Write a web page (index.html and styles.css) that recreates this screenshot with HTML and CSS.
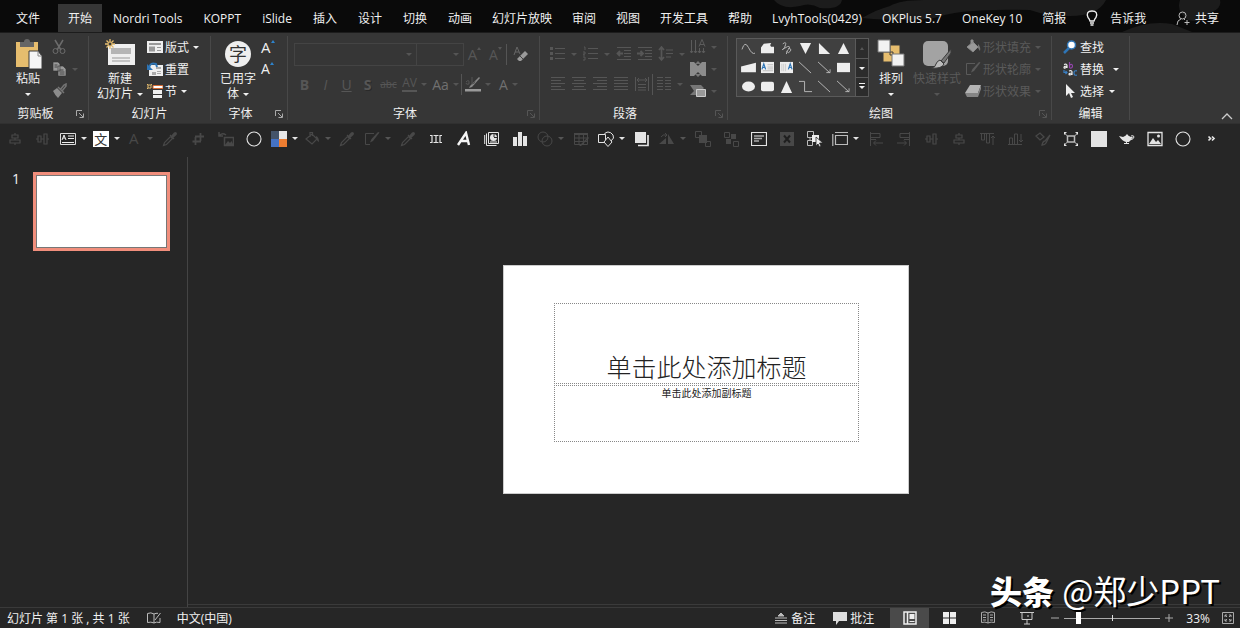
FILE: index.html
```html
<!DOCTYPE html>
<html lang="zh-CN">
<head>
<meta charset="utf-8">
<title>演示文稿</title>
<link rel="stylesheet" href="styles.css">
</head>
<body>
<svg class="sprite" aria-hidden="true">
  <symbol id="launch" viewBox="0 0 8 8"><path d="M.5 6V.5H6M3 3l4 4M7.500 3.500v4h-4" fill="none" stroke="currentColor"/></symbol>
  <symbol id="alignh" viewBox="0 0 16 16"><path d="M8 2v2M8 7v2M8 12v2M5 4h6v3H5zM3 9h10v3H3z" fill="none" stroke="currentColor" stroke-width="1.200"/></symbol>
  <symbol id="alignv" viewBox="0 0 16 16"><path d="M1 8h2M6 8h3M12 8h2M3 5h3v6H3zM9 3h3v10H9z" fill="none" stroke="currentColor" stroke-width="1.200"/></symbol>
  <symbol id="drop" viewBox="0 0 16 16"><path d="M1.500 14.500l1-3 6-6 2 2-6 6zM8 4l4 4" fill="none" stroke="currentColor" stroke-width="1.200"/><path d="M9 5l3-3.500q1.500-1 2.500 0t0 2.500L11 7z" fill="currentColor"/></symbol>
  <symbol id="crop" viewBox="0 0 16 16"><path d="M5.500 6v8M2.500 10.500H11M10.500 2v8M5 5.500h9" fill="none" stroke="currentColor" stroke-width="1.800"/></symbol>
  <symbol id="picreset" viewBox="0 0 16 16"><path d="M1 5q3-4 7-1M1 1v4h4M6.500 6.500h9v8h-9z" fill="none" stroke="currentColor" stroke-width="1.500"/><path d="M7 14l3-4 2 2 1.500-2 2 4z" fill="currentColor"/></symbol>
  <symbol id="circle" viewBox="0 0 16 16"><circle cx="8" cy="8" r="7" fill="none" stroke="currentColor" stroke-width="1.100"/></symbol>
  <symbol id="bucket" viewBox="0 0 16 16"><path d="M2 8l6-5 5 5-5 5zM6 6V1.500h2.500V5" fill="none" stroke="currentColor" stroke-width="1.200"/><path d="M12 5q3 1 3 6-2-1-3-4z" fill="currentColor"/></symbol>
  <symbol id="pen" viewBox="0 0 16 16"><path d="M10 2.500H1.500v11H6" fill="none" stroke="currentColor"/><path d="M15.500 1.500L9 10l-3 1.500L7.500 8 14 1z" fill="currentColor"/></symbol>
  <symbol id="blocks" viewBox="0 0 16 16"><path d="M4 4v8M8 4v8M12 4v8M2 4.500h2.500M5.500 4.500h5M11.500 4.500H14M2 11.500h2.500M5.500 11.500h5M11.500 11.500H14" fill="none" stroke="currentColor" stroke-width="1.200"/></symbol>
  <symbol id="chartpage" viewBox="0 0 16 16"><path d="M4.500 1.500h10v11h-10zM2.500 2.500v12h10M.7 4v9" fill="none" stroke="currentColor"/><circle cx="9.500" cy="6.500" r="3.500" fill="currentColor"/><path d="M10 6V3M10 6.500h3" stroke="#262626"/><path d="M6 11h7" stroke="currentColor"/></symbol>
  <symbol id="bars" viewBox="0 0 16 16"><path d="M1 6h4v9H1zM6 1h4v14H6zM11 5h4v10h-4z" fill="currentColor"/></symbol>
  <symbol id="union" viewBox="0 0 16 16"><circle cx="6" cy="6" r="5" fill="none" stroke="currentColor"/><circle cx="10" cy="10" r="5" fill="none" stroke="currentColor"/></symbol>
  <symbol id="tablepen" viewBox="0 0 16 16"><path d="M1.500 3.500h13v10h-13zM1 7h14M1 10.500h14M6 3v11M10.500 3v11" fill="none" stroke="currentColor"/><path d="M1 2h14v2H1zM15 6l1 1-8 8H6z" fill="currentColor"/></symbol>
  <symbol id="shapes" viewBox="0 0 16 16"><path d="M.5 3.500h7v8h-7z" fill="none" stroke="currentColor"/><path d="M6 4q1-3 4-3t5 3-2 6" fill="none" stroke="currentColor"/><path d="M10 6l4 5-4 4.500L6 11z" fill="#262626" stroke="currentColor"/></symbol>
  <symbol id="front" viewBox="0 0 16 16"><path d="M14 4v10.500H4" fill="none" stroke="currentColor" stroke-width="1.700"/><path d="M1 1h11v11H1z" fill="currentColor"/></symbol>
  <symbol id="flip" viewBox="0 0 16 16"><path d="M0 13l7-6v6zM9 3l6 10H9z" fill="currentColor"/><path d="M2 6q2-3 5-2M6 2l2 2-2 2" fill="none" stroke="currentColor"/></symbol>
  <symbol id="fwd" viewBox="0 0 16 16"><path d="M.5.500h6v6h-6zM10.500 10.500h5v5h-5z" fill="none" stroke="currentColor"/><path d="M4 4h8v8H4z" fill="currentColor"/></symbol>
  <symbol id="bwd" viewBox="0 0 16 16"><path d="M1.500 1.500h5v5h-5zM10.500 10.500h5v5h-5z" fill="none" stroke="currentColor"/><path d="M8 3h5v5H8zM3 8h5v5H3z" fill="currentColor"/></symbol>
  <symbol id="textbox" viewBox="0 0 16 16"><path d="M.5 1.500h15v13H.5z" fill="none" stroke="currentColor" stroke-width="1.200"/><path d="M3 5h10M3 7.500h8M3 10h5" stroke="#aaa" stroke-width="1.500"/></symbol>
  <symbol id="cross" viewBox="0 0 16 16"><path d="M1 1h14v14H1z" fill="currentColor"/><path d="M5 4.500l6 7M11 4.500l-6 7" stroke="#1f1f1f" stroke-width="2"/></symbol>
  <symbol id="selpane" viewBox="0 0 16 16"><path d="M.5.500h6v6h-6zM.5 9.500h5v5h-5zM3 7v2" fill="none" stroke="#bbb"/><path d="M5 4h7v7H5z" fill="#eee"/><path d="M9 6v9l2-2 1.500 3 1.500-1-1.500-3H16z" fill="#eee" stroke="#262626" stroke-width=".8"/></symbol>
  <symbol id="frame" viewBox="0 0 16 16"><path d="M3.500 4.500h12v9h-12zM.8 3v12M3 1.500h13" fill="none" stroke="#bbb" stroke-width="1.200"/></symbol>
  <symbol id="aleft" viewBox="0 0 16 16"><path d="M2.500 1v14M3 2.500h9v4H3M3 8.500h5M15 12H6M8 9.500L5.500 12 8 14.500" fill="none" stroke="currentColor"/></symbol>
  <symbol id="aright" viewBox="0 0 16 16"><path d="M13.500 1v14M13 2.500H4v4h9M13 8.500H8M1 12h9M8 9.500l2.500 2.500L8 14.500" fill="none" stroke="currentColor"/></symbol>
  <symbol id="atop" viewBox="0 0 16 16"><path d="M1 2.500h14M2.500 3v6h3V3M7.500 3v9h3V3M14 14V5M12 7l2-2 2 2" fill="none" stroke="currentColor"/></symbol>
  <symbol id="abot" viewBox="0 0 16 16"><path d="M1 13.500h14M2.500 13V7h3v6M7.500 13V3h3v10M14 3v8M12 9l2 2 2-2" fill="none" stroke="currentColor"/></symbol>
  <symbol id="brushpaint" viewBox="0 0 16 16"><path d="M1 5l4-3 4 4-4 3zM7 14q1-4 3-4l5-6-4 8q-1 2-4 2z" fill="none" stroke="currentColor" stroke-width="1.300"/></symbol>
  <symbol id="resize" viewBox="0 0 16 16"><path d="M4.500 5h7v6h-7z" fill="none" stroke="#bbb" stroke-width="1.500"/><path d="M1 2l3 2.500M15 2l-3 2.500M1 14l3-2.500M15 14l-3-2.500" fill="none" stroke="#bbb"/><path d="M1 1h3L1 4zM15 1h-3l3 3zM1 15h3l-3-3zM15 15h-3l3-3z" fill="currentColor"/></symbol>
  <symbol id="square" viewBox="0 0 16 16"><path d="M0 0h16v16H0z" fill="currentColor"/></symbol>
  <symbol id="lamp" viewBox="0 0 16 16"><path d="M0 5l4 1q3-1 4-3 1 2 4 3l2 0-4 5H8v1h2v1H5v-1h2v-1Q3 10 0 5z" fill="currentColor"/><path d="M12 5q3-1 3 1t-4 3" fill="none" stroke="currentColor"/></symbol>
  <symbol id="picture" viewBox="0 0 16 16"><path d="M1 1.500h14v13H1z" fill="none" stroke="currentColor" stroke-width="1.300"/><path d="M2 13l4-6 3 4 2-2 3 4z" fill="currentColor"/><circle cx="11.500" cy="5" r="1.500" fill="currentColor"/></symbol>
  <symbol id="more" viewBox="0 0 16 16"><path d="M5.500 5.500l2 2-2 2M9 5.500l2 2-2 2" fill="none" stroke="currentColor" stroke-width="1.700"/></symbol>
  <symbol id="bullets" viewBox="0 0 16 16"><path d="M0 1h3v3H0zM0 6h3v3H0zM0 11h3v3H0z" fill="currentColor"/><path d="M5 2.500h10M5 7.500h10M5 12.500h10" stroke="currentColor"/></symbol>
  <symbol id="numbers" viewBox="0 0 16 16"><path d="M1 1h1v3M0 6h2v2H0v1h2M0 11h2v3H0" fill="none" stroke="currentColor"/><path d="M5 2.500h10M5 7.500h10M5 12.500h10" stroke="currentColor"/></symbol>
  <symbol id="outdent" viewBox="0 0 16 16"><path d="M1 1.500h14M8 4.500h7M8 7.500h7M8 10.500h7M1 13.500h14" stroke="currentColor"/><path d="M7 7.500H2M4 5L1.500 7.500 4 10" fill="none" stroke="currentColor" stroke-width="1.800"/></symbol>
  <symbol id="indent" viewBox="0 0 16 16"><path d="M1 1.500h14M8 4.500h7M8 7.500h7M8 10.500h7M1 13.500h14" stroke="currentColor"/><path d="M0 7.500h5M3.500 5L6 7.500 3.500 10" fill="none" stroke="currentColor" stroke-width="1.800"/></symbol>
  <symbol id="spacing" viewBox="0 0 16 16"><path d="M8 4h7M8 7.500h7M8 11h5" stroke="currentColor"/><path d="M3.500 1v13M1 4l2.500-3L6 4M1 11l2.500 3L6 11" fill="none" stroke="currentColor" stroke-width="1.700"/></symbol>
  <symbol id="lines" viewBox="0 0 16 16"><path d="M1 1.500h14M1 4.500h10M1 7.500h14M1 10.500h10M1 13.500h14" stroke="currentColor"/></symbol>
  <symbol id="linesc" viewBox="0 0 16 16"><path d="M1 1.500h14M3 4.500h10M1 7.500h14M3 10.500h10M1 13.500h14" stroke="currentColor"/></symbol>
  <symbol id="linesr" viewBox="0 0 16 16"><path d="M1 1.500h14M5 4.500h10M1 7.500h14M5 10.500h10M1 13.500h14" stroke="currentColor"/></symbol>
  <symbol id="linesj" viewBox="0 0 16 16"><path d="M1 1.500h14M1 4.500h14M1 7.500h14M1 10.500h14M1 13.500h14" stroke="currentColor"/></symbol>
  <symbol id="dist" viewBox="0 0 16 16"><path d="M1.500 1v14M14.500 1v14M3 4h10M5 2L3 4l2 2M11 2l2 2-2 2M4 8.500h8M4 11.500h8M4 14h8" fill="none" stroke="currentColor"/></symbol>
  <symbol id="cols" viewBox="0 0 16 16"><path d="M1 1.500h6M9 1.500h6M1 4.500h6M9 4.500h6M1 7.500h6M9 7.500h6M1 10.500h6M9 10.500h6M1 13.500h6M9 13.500h6" stroke="currentColor"/></symbol>
  <symbol id="textdir" viewBox="0 0 16 16"><path d="M1.500 1v13M5.500 1v13M9.500 9v5M13.500 9v5M0 12l1.500 2L3 12M4 12l1.500 2L7 12M8 12l1.500 2 1.500-2M12 12l1.500 2 1.500-2M9 7.500L12 .5l3 7M10 5.500h4" fill="none" stroke="currentColor"/></symbol>
  <symbol id="textalign" viewBox="0 0 16 16"><path d="M0 1h4l4 4 4-4h4v14h-4l-4-4-4 4H0z" fill="#8c8c8c"/><path d="M8 0l3 3H5zM8 16l3-3H5z" fill="#777"/></symbol>
  <symbol id="smartart" viewBox="0 0 16 16"><path d="M0 2h11l3 3-2 2H6v5H0l4-4z" fill="#777"/><path d="M6.500 6.500h9v7h-9z" fill="#999" stroke="#ccc"/></symbol>
  <symbol id="eraser" viewBox="0 0 16 16"><path d="M1 9l3-8 3 7M2 6h4" fill="none" stroke="#666"/><path d="M5 12l7-7 3 3-7 7H6l-2-2z" fill="#9a9a9a"/><path d="M7 10l3 3" stroke="#444"/></symbol>
  <symbol id="highlight" viewBox="0 0 16 16"><path d="M0 13h16v2.500H0z" fill="#9a9a9a"/><path d="M14 1l1 1-8 9-3 1 1-2z" fill="#888"/><path d="M1 6q3-3 3 0v2q-3 1-3-1M7 1v7q3 0 3-3" fill="none" stroke="#555"/></symbol>
  <symbol id="cut" viewBox="0 0 16 16"><path d="M4 1l6 10M12 1L6 11" stroke="#6c6c6c" stroke-width="1.500"/><circle cx="4.500" cy="12" r="2.500" fill="none" stroke="#6c6c6c"/><circle cx="11.500" cy="12" r="2.500" fill="none" stroke="#6c6c6c"/></symbol>
  <symbol id="copy" viewBox="0 0 16 16"><path d="M2 1h5l2 2v7H2zM7 5h5l3 3v7H7z" fill="#999" stroke="#333" stroke-width=".6"/><path d="M3.500 4h3M3.500 6h3M8.500 9h4M8.500 11h5M8.500 13h5" stroke="#444"/></symbol>
  <symbol id="painter" viewBox="0 0 16 16"><path d="M2 8l4-3 5 5-4 5Q4 12 2 8z" fill="#8c8c8c"/><path d="M7 4l6 6M9 7l4-5 2-1v2l-4 5" stroke="#747474" stroke-width="1.500" fill="none"/></symbol>
  <symbol id="layout" viewBox="0 0 16 16"><path d="M0 2h16v12H0z" fill="#efefef"/><path d="M2 4h12v2H2zM2 7.500h6v5H2zM10 8h4v1h-4zM10 11h4v1h-4z" fill="#999"/></symbol>
  <symbol id="reset" viewBox="0 0 16 16"><path d="M2 4h14v11H2z" fill="#efefef"/><path d="M9 6h5v2H9zM5 11h4v3H5zM10 10h4v1h-4zM10 12h4v1h-4z" fill="#aaa"/><path d="M2 7Q3 1 9 3l1 3" fill="none" stroke="#2e75b6" stroke-width="2"/><path d="M0 3v6h6z" fill="#2e75b6"/></symbol>
  <symbol id="section" viewBox="0 0 16 16"><path d="M1 2h3v3H1zM0 1l1 1M5 1L4 2M0 6l1-1" fill="none" stroke="#e6bd6e"/><path d="M6 2.500h10v3H6z" fill="#fff" stroke="#d26a32"/><path d="M6 7h9v4H6zM6 12h9v3H6z" fill="#efefef"/></symbol>
  <symbol id="find" viewBox="0 0 14 14"><path d="M1 13l6-6" stroke="#2e75b6" stroke-width="2.500"/><circle cx="8.500" cy="5" r="4" fill="#fff" stroke="#2e75b6" stroke-width="1.500"/></symbol>
  <symbol id="pointer" viewBox="0 0 14 14"><path d="M3 0v12l3-3 2 5 2-1-2-4h4z" fill="#eee"/></symbol>
  <symbol id="gfill" viewBox="0 0 16 16"><path d="M2 8l6-5 5 5-5 5zM6 5V1h2v4" fill="#999" stroke="#888"/><path d="M13 5q3 3 2 7l-2-3z" fill="#777"/></symbol>
  <symbol id="geffect" viewBox="0 0 16 16"><path d="M5 2h11l-3 8H0z" fill="#b4b4b4"/><path d="M0 10h13l3-8v4l-3 8H2z" fill="#858585"/></symbol>
</svg>

<header class="tabs">
  <svg class="tabs-art" viewBox="0 0 470 32" aria-hidden="true"><path d="M4 0q8 10 26 6 10-4 20 2 20 2 22-8zM92 18q16-9 28-12 10-6 34-6h182q-8 16-36 16-24 0-40-6-70-2-96 8-26 4-72 0zM410 0q-4 12 8 20 20 4 24-8 10-4 8-12zM352 32q26-12 50-8l20 8z"/></svg>
  <nav class="tab-list">
    <div class="tab-set"><button class="tab tab-file">文件</button><button class="tab tab-active">开始</button><button class="tab">Nordri Tools</button><button class="tab">KOPPT</button><button class="tab">iSlide</button><button class="tab">插入</button><button class="tab">设计</button><button class="tab">切换</button><button class="tab">动画</button></div>
    <div class="tab-set tab-set-tight"><button class="tab">幻灯片放映</button><button class="tab">审阅</button><button class="tab">视图</button><button class="tab">开发工具</button><button class="tab">帮助</button><button class="tab">LvyhTools(0429)</button><button class="tab">OKPlus 5.7</button><button class="tab">OneKey 10</button><button class="tab">简报</button>
    <button class="tab tab-icon"><svg class="bulb" viewBox="0 0 12 16"><path d="M4 11Q3.500 9 2 7.500-.5 1 6 1t4 6.500Q8.500 9 8 11zM4 13h4M4.500 15h3" fill="none" stroke="#eee" stroke-width="1.300"/></svg>告诉我</button></div>
  </nav>
  <button class="share"><svg class="i14" viewBox="0 0 14 14"><circle cx="6.500" cy="4.500" r="3.500" fill="none" stroke="#bbb"/><path d="M1 14q0-5 4-6M8 8l1 1M11 9v5M8.500 11.500h5" fill="none" stroke="#bbb"/></svg>共享</button>
</header>

<section class="ribbon">
  <div class="group g-clip">
    <div class="group-body">
      <button class="big"><svg class="big-icon" viewBox="0 0 30 30"><path d="M3 3h22v25H3z" fill="#e6bd6e"/><path d="M7 3h4q0-3 3-3t3 3h4v5H7z" fill="#666"/><path d="M16 12h9l4 5v13H16z" fill="#f5f5f5" stroke="#3a3a3a"/><path d="M25 12v5h4" fill="none" stroke="#888"/></svg><span>粘贴</span><span class="caret-line"><i class="caret"></i></span></button>
      <div class="stack">
        <button class="small" aria-label="剪切"><svg class="i16"><use href="#cut"/></svg></button>
        <button class="small" aria-label="复制"><svg class="i16"><use href="#copy"/></svg><i class="caret dim"></i></button>
        <button class="small" aria-label="格式刷"><svg class="i16"><use href="#painter"/></svg></button>
      </div>
    </div>
    <div class="group-foot"><span>剪贴板</span><button class="launch" aria-label="剪贴板选项"><svg><use href="#launch"/></svg></button></div>
  </div>
  <div class="group g-slides">
    <div class="group-body">
      <button class="big"><svg class="big-icon" viewBox="0 0 30 30"><path d="M3 5h27v21H3z" fill="#efefef"/><path d="M6 9h20v6H6z" fill="#b5b5b5"/><path d="M7 19h18M7 22h18" stroke="#999"/><path d="M5 0v10M0 5h10M1.500 1.500l7 7M8.500 1.500l-7 7" stroke="#e6bd6e" stroke-width="1.300"/><circle cx="5" cy="5" r="2" fill="#3a3a3a" stroke="#e6bd6e"/></svg><span>新建</span><span>幻灯片<i class="caret"></i></span></button>
      <div class="stack">
        <button class="small"><svg class="i16"><use href="#layout"/></svg>版式<i class="caret"></i></button>
        <button class="small"><svg class="i16"><use href="#reset"/></svg>重置</button>
        <button class="small"><svg class="i16"><use href="#section"/></svg>节<i class="caret"></i></button>
      </div>
    </div>
    <div class="group-foot"><span>幻灯片</span></div>
  </div>
  <div class="group g-used">
    <div class="group-body">
      <button class="big"><span class="glyph-disc">字</span><span>已用字</span><span>体<i class="caret"></i></span></button>
      <div class="stack">
        <button class="small grow" aria-label="增大字号">A<i class="tri-up blue"></i></button>
        <button class="small grow" aria-label="减小字号">A<i class="tri-up blue"></i></button>
      </div>
    </div>
    <div class="group-foot"><span>字体</span><button class="launch" aria-label="字体选项"><svg><use href="#launch"/></svg></button></div>
  </div>
  <div class="group g-font">
    <div class="group-body rows">
      <div class="row">
        <div class="combo combo-name"><select aria-label="字体名称" disabled><option></option></select><i class="caret dim"></i></div><div class="combo combo-size"><select aria-label="字号" disabled><option></option></select><i class="caret dim"></i></div>
        <button class="cell letter large-a">A<i class="tri-up"></i></button><button class="cell letter">A<i class="tri-down"></i></button><i class="sep"></i><button class="cell wide" aria-label="清除格式"><svg class="i16"><use href="#eraser"/></svg></button>
      </div>
      <div class="row">
        <button class="cell letter bold">B</button><button class="cell letter italic">I</button><button class="cell letter under">U</button><button class="cell letter shadow">S</button><button class="cell strike">abc</button><button class="cell drop spaced"><span>AV</span><i class="caret dim"></i></button><button class="cell drop letter mid">Aa<i class="caret dim"></i></button><i class="sep"></i><button class="cell drop" aria-label="突出显示"><svg class="i16"><use href="#highlight"/></svg><i class="caret dim"></i></button><button class="cell drop letter mid">A<i class="caret dim"></i></button>
      </div>
    </div>
    <div class="group-foot"><span>字体</span><button class="launch off" aria-label="字体选项"><svg><use href="#launch"/></svg></button></div>
  </div>
  <div class="group g-para">
    <div class="group-body">
      <div class="rows">
        <div class="row">
          <button class="cell drop" aria-label="项目符号"><svg class="i16"><use href="#bullets"/></svg><i class="caret dim"></i></button><button class="cell drop" aria-label="编号"><svg class="i16"><use href="#numbers"/></svg><i class="caret dim"></i></button><button class="cell" aria-label="减少缩进"><svg class="i16"><use href="#outdent"/></svg></button><button class="cell" aria-label="增加缩进"><svg class="i16"><use href="#indent"/></svg></button><button class="cell drop" aria-label="行距"><svg class="i16"><use href="#spacing"/></svg><i class="caret dim"></i></button>
        </div>
        <div class="row">
          <button class="cell" aria-label="左对齐"><svg class="i16"><use href="#lines"/></svg></button><button class="cell" aria-label="居中"><svg class="i16"><use href="#linesc"/></svg></button><button class="cell" aria-label="右对齐"><svg class="i16"><use href="#linesr"/></svg></button><button class="cell" aria-label="两端对齐"><svg class="i16"><use href="#linesj"/></svg></button><button class="cell" aria-label="分散对齐"><svg class="i16"><use href="#dist"/></svg></button><i class="sep"></i><button class="cell drop" aria-label="分栏"><svg class="i16"><use href="#cols"/></svg><i class="caret dim"></i></button>
        </div>
      </div>
      <div class="stack">
        <button class="small" aria-label="文字方向"><svg class="i16"><use href="#textdir"/></svg><i class="caret dim"></i></button>
        <button class="small" aria-label="对齐文本"><svg class="i16"><use href="#textalign"/></svg><i class="caret dim"></i></button>
        <button class="small" aria-label="转换为 SmartArt"><svg class="i16"><use href="#smartart"/></svg><i class="caret dim"></i></button>
      </div>
    </div>
    <div class="group-foot"><span>段落</span><button class="launch off" aria-label="段落选项"><svg><use href="#launch"/></svg></button></div>
  </div>
  <div class="group g-draw">
    <div class="group-body">
      <div class="gallery">
        <div class="gallery-grid">
          <button aria-label="曲线"><svg viewBox="0 0 16 14"><path d="M1 8Q4-2 8 6t7 6" class="ln"/></svg></button>
          <button aria-label="任意多边形"><svg viewBox="0 0 16 14"><path d="M1 6l3-4 8-1q-2 3 0 4h3v7H1z" class="fl"/></svg></button>
          <button aria-label="自由曲线"><svg viewBox="0 0 16 14"><path d="M4 2q4-3 3 1T4 8t5-3q4-1 1 3t-2 5M10 7q4 0 2 3t-4 0" class="ln"/></svg></button>
          <button aria-label="倒三角"><svg viewBox="0 0 16 14"><path d="M2 1h12L8 13z" class="fl"/></svg></button>
          <button aria-label="直角三角形"><svg viewBox="0 0 16 14"><path d="M2 1l12 12H2z" class="fl"/></svg></button>
          <button aria-label="三角形"><svg viewBox="0 0 16 14"><path d="M8 1l6 12H2z" class="fl"/></svg></button>
          <button aria-label="梯形"><svg viewBox="0 0 16 14"><path d="M0 6l16-4v10H0z" class="fl"/></svg></button>
          <button aria-label="横排文本框"><svg viewBox="0 0 16 14"><path d="M1 1h14v12H1z" class="fl"/><path d="M2 9l2-6 2 6M3 7h2" stroke="#2e75b6" stroke-width="1.300" fill="none"/><path d="M8 4h6M8 6.500h6M3 10.500h11M8 8.500h6" stroke="#bbb"/></svg></button>
          <button aria-label="竖排文本框"><svg viewBox="0 0 16 14"><path d="M1 1h14v12H1z" class="fl"/><path d="M10 9l2-6 2 6M11 7h2" stroke="#2e75b6" stroke-width="1.300" fill="none"/><path d="M3 3v8M5 3v8M7 3v8" stroke="#ccc"/></svg></button>
          <button aria-label="直线"><svg viewBox="0 0 16 14"><path d="M1 1l13 12" class="ln"/></svg></button>
          <button aria-label="箭头"><svg viewBox="0 0 16 14"><path d="M1 1l13 12M10 12.500h4V9" class="ln"/></svg></button>
          <button aria-label="矩形"><svg viewBox="0 0 16 14"><path d="M1 2h14v10H1z" class="fl"/></svg></button>
          <button aria-label="椭圆"><svg viewBox="0 0 16 14"><ellipse cx="8" cy="7" rx="7" ry="5.500" class="fl"/></svg></button>
          <button aria-label="圆角矩形"><svg viewBox="0 0 16 14"><rect x="1" y="2" width="14" height="10" rx="2" class="fl"/></svg></button>
          <button aria-label="等腰三角形"><svg viewBox="0 0 16 14"><path d="M8 1l6 13H2z" class="fl"/></svg></button>
          <button aria-label="肘形连接符"><svg viewBox="0 0 16 14"><path d="M1 1.500h6v11h8" class="ln"/></svg></button>
          <button aria-label="连接符"><svg viewBox="0 0 16 14"><path d="M1 1l13 12" class="ln"/></svg></button>
          <button aria-label="箭头连接符"><svg viewBox="0 0 16 14"><path d="M1 1l13 12M10 12.500h4V9" class="ln"/></svg></button>
        </div>
        <div class="gallery-nav"><button aria-label="上一行"><i class="tri-up"></i></button><button aria-label="下一行"><i class="caret"></i></button><button aria-label="其他"><i class="caret over"></i></button></div>
      </div>
      <button class="big arrange"><svg class="big-icon" viewBox="0 0 30 30"><path d="M14 6h10v10H14zM7 13h10v10H7z" fill="#e6bd6e" stroke="#3a3a3a"/><path d="M2 1h12v12H2zM16 15h12v12H16z" fill="#f2f2f2" stroke="#777"/></svg><span>排列</span><span class="caret-line"><i class="caret"></i></span></button>
      <button class="big quick"><svg class="big-icon" viewBox="0 0 30 30"><rect x="1" y="2" width="25" height="25" rx="5" fill="#a3a3a3"/><path d="M29 10v4l-7 10-3-2z" fill="#777" stroke="#3a3a3a"/><path d="M18 21l4 4q-2 5-13 4 5-1 5-4 1-3 4-4z" fill="#bbb" stroke="#3a3a3a"/></svg><span>快速样式</span><span class="caret-line"><i class="caret dim"></i></span></button>
      <div class="stack off">
        <button class="small"><svg class="i16"><use href="#gfill"/></svg>形状填充<i class="caret dim"></i></button>
        <button class="small"><svg class="i16"><use href="#pen"/></svg>形状轮廓<i class="caret dim"></i></button>
        <button class="small"><svg class="i16"><use href="#geffect"/></svg>形状效果<i class="caret dim"></i></button>
      </div>
    </div>
    <div class="group-foot"><span>绘图</span><button class="launch off" aria-label="绘图选项"><svg><use href="#launch"/></svg></button></div>
  </div>
  <div class="group g-edit">
    <div class="group-body">
      <div class="stack">
        <button class="small"><svg class="i14"><use href="#find"/></svg>查找</button>
        <button class="small far"><svg class="i14" viewBox="0 0 14 14"><path d="M1 2.500q3-1 3 1V6M4 4q-3 0-3 1.500T4 5" fill="none" stroke="#eee" stroke-width="1.200"/><path d="M6.500 0v6M6.500 3q3-1.500 3 1t-3 2" fill="none" stroke="#9445ad" stroke-width="1.200"/><path d="M6 9q3-1 3 1v3M9 11q-3 0-3 1.200t3 0" fill="none" stroke="#eee" stroke-width="1.200"/><path d="M14 9q-3-1-3 2t3 2M1 8v2.500h3M2.500 9L4 10.500 2.500 12" fill="none" stroke="#3a80c5" stroke-width="1.200"/></svg>替换<i class="caret"></i></button>
        <button class="small"><svg class="i14"><use href="#pointer"/></svg>选择<i class="caret"></i></button>
      </div>
    </div>
    <div class="group-foot"><span>编辑</span></div>
  </div>
  <button class="collapse" aria-label="折叠功能区"><svg viewBox="0 0 12 7"><path d="M1 6l5-5 5 5" fill="none" stroke="#ccc" stroke-width="1.300"/></svg></button>
</section>

<div class="toolbar" role="toolbar">
  <button class="tool off" aria-label="水平居中"><svg><use href="#alignh"/></svg></button>
  <button class="tool off" aria-label="垂直居中"><svg><use href="#alignv"/></svg></button>
  <button class="tool drop" aria-label="文本框"><svg viewBox="0 0 16 16"><path d="M.5 2.500h15v11H.5z" fill="none" stroke="#ddd"/><path d="M2 9l2-5 2 5M3 7h2M8 5h6M8 7.500h6M2 11.500h12" stroke="#eee" fill="none"/></svg><i class="caret"></i></button>
  <button class="tool drop"><span class="wen">文</span><i class="caret"></i></button>
  <button class="tool drop off"><span class="tool-letter">A</span><i class="caret dim"></i></button>
  <button class="tool off" aria-label="取色"><svg><use href="#drop"/></svg></button>
  <button class="tool off" aria-label="裁剪"><svg><use href="#crop"/></svg></button>
  <button class="tool off" aria-label="重设图片"><svg><use href="#picreset"/></svg></button>
  <button class="tool" aria-label="圆"><svg><use href="#circle"/></svg></button>
  <button class="tool drop" aria-label="主题颜色"><svg viewBox="0 0 16 16"><path d="M0 0h8v8H0z" fill="#44546a"/><path d="M8 0h8v8H8z" fill="#e7e6e6"/><path d="M0 8h8v8H0z" fill="#4472c4"/><path d="M8 8h8v8H8z" fill="#ed7d31"/></svg><i class="caret"></i></button>
  <button class="tool drop off" aria-label="填充"><svg><use href="#bucket"/></svg><i class="caret dim"></i></button>
  <button class="tool off" aria-label="填充取色"><svg><use href="#drop"/></svg></button>
  <button class="tool drop off" aria-label="轮廓"><svg><use href="#pen"/></svg><i class="caret dim"></i></button>
  <button class="tool off" aria-label="轮廓取色"><svg><use href="#drop"/></svg></button>
  <button class="tool" aria-label="分布"><svg><use href="#blocks"/></svg></button>
  <button class="tool" aria-label="艺术字"><svg viewBox="0 0 16 16"><path d="M2 14L10 2l3 12M5 10h7" fill="none" stroke="#f5f5f5" stroke-width="2.400"/></svg></button>
  <button class="tool" aria-label="页面图表"><svg><use href="#chartpage"/></svg></button>
  <button class="tool" aria-label="图表"><svg><use href="#bars"/></svg></button>
  <button class="tool drop off" aria-label="合并形状"><svg><use href="#union"/></svg><i class="caret dim"></i></button>
  <button class="tool off" aria-label="绘制表格"><svg><use href="#tablepen"/></svg></button>
  <button class="tool drop" aria-label="形状"><svg><use href="#shapes"/></svg><i class="caret"></i></button>
  <button class="tool" aria-label="置于顶层"><svg><use href="#front"/></svg></button>
  <button class="tool drop off" aria-label="旋转"><svg><use href="#flip"/></svg><i class="caret dim"></i></button>
  <button class="tool off" aria-label="上移一层"><svg><use href="#fwd"/></svg></button>
  <button class="tool off" aria-label="下移一层"><svg><use href="#bwd"/></svg></button>
  <button class="tool" aria-label="占位符"><svg><use href="#textbox"/></svg></button>
  <button class="tool off" aria-label="删除"><svg><use href="#cross"/></svg></button>
  <button class="tool" aria-label="选择窗格"><svg><use href="#selpane"/></svg></button>
  <button class="tool drop" aria-label="幻灯片大小"><svg><use href="#frame"/></svg><i class="caret"></i></button>
  <button class="tool off" aria-label="左对齐"><svg><use href="#aleft"/></svg></button>
  <button class="tool off" aria-label="右对齐"><svg><use href="#aright"/></svg></button>
  <button class="tool off" aria-label="横向分布"><svg><use href="#alignv"/></svg></button>
  <button class="tool off" aria-label="纵向分布"><svg><use href="#alignh"/></svg></button>
  <button class="tool off" aria-label="顶端对齐"><svg><use href="#atop"/></svg></button>
  <button class="tool off" aria-label="底端对齐"><svg><use href="#abot"/></svg></button>
  <button class="tool off" aria-label="格式刷"><svg><use href="#brushpaint"/></svg></button>
  <button class="tool" aria-label="适应大小"><svg><use href="#resize"/></svg></button>
  <button class="tool" aria-label="矩形"><svg><use href="#square"/></svg></button>
  <button class="tool" aria-label="神灯"><svg><use href="#lamp"/></svg></button>
  <button class="tool" aria-label="图片"><svg><use href="#picture"/></svg></button>
  <button class="tool" aria-label="椭圆"><svg><use href="#circle"/></svg></button>
  <button class="tool" aria-label="更多"><svg><use href="#more"/></svg></button>
</div>

<main class="work">
  <aside class="thumbs"><span class="thumb-no">1</span><button class="thumb" aria-label="幻灯片 1"></button></aside>
  <section class="canvas">
    <article class="slide">
      <h1 class="ph ph-title">单击此处添加标题</h1>
      <p class="ph ph-sub">单击此处添加副标题</p>
    </article>
    <div class="watermark"><b>头条</b><span>@郑少PPT</span></div>
  </section>
</main>

<footer class="status">
  <span>幻灯片 第 1 张 , 共 1 张</span>
  <button class="proof" aria-label="拼写检查"><svg viewBox="0 0 14 12"><path d="M7 2Q4 0 .5 1.500v9Q4 9.500 7 11q2-1.500 6-.5V6M7 2v9M7 2q2-1 4-.7M13.500 1L8 8" fill="none" stroke="#bbb"/></svg></button>
  <span>中文(中国)</span>
  <div class="status-right">
    <button class="note"><svg class="i12" viewBox="0 0 12 12"><path d="M6 1l3 3H3zM0 6h12M0 8.500h12M0 11h12" stroke="#bbb" fill="#bbb"/></svg>备注</button>
    <button class="note comment"><svg class="i14" viewBox="0 0 14 14"><path d="M0 1h14v9H6l-3 4v-4H0z" fill="#ddd"/></svg>批注</button>
    <button class="view view-on" aria-label="普通视图"><svg viewBox="0 0 14 14"><path d="M1 1h12v12H1zM4.500 1v12" fill="none" stroke="#eee" stroke-width="1.500"/><path d="M6.500 3h5v5h-5zM6.500 10h5v1h-5z" fill="#eee"/></svg></button>
    <button class="view" aria-label="幻灯片浏览"><svg viewBox="0 0 14 14"><path d="M1 1h6v5.500H1zM8 1h6v5.500H8zM1 7.500h6V13H1zM8 7.500h6V13H8z" fill="#eee"/></svg></button>
    <button class="view" aria-label="阅读视图"><svg viewBox="0 0 14 14"><path d="M7 2Q4 0 .5 1.500v10Q4 10.500 7 12q3-1.500 6.500-.5v-10Q10 0 7 2v10M2 4h3M2 6.500h3M2 9h3M9 4h3M9 6.500h3M9 9h3" fill="none" stroke="#aaa"/></svg></button>
    <button class="view" aria-label="幻灯片放映"><svg viewBox="0 0 14 14"><path d="M0 1.500h14M2 2v6.500h10V2M7 9v4M4 13h6M7 5l2 0" fill="none" stroke="#ccc"/></svg></button>
    <button class="zoom-step" aria-label="缩小"><svg viewBox="0 0 8 8"><path d="M0 4h8" stroke="#aaa"/></svg></button>
    <input class="zoom" type="range" min="0" max="100" value="13" aria-label="缩放">
    <button class="zoom-step" aria-label="放大"><svg viewBox="0 0 8 8"><path d="M0 4h8M4 0v8" stroke="#aaa"/></svg></button>
    <span class="zoom-value">33%</span>
    <button class="fit" aria-label="适应窗口"><svg viewBox="0 0 12 12"><path d="M.5.500h11v11H.5zM3 3l2 2M9 3L7 5M3 9l2-2M9 9L7 7M3 5V3h2M7 3h2v2M9 7v2H7M5 9H3V7" fill="none" stroke="#aaa"/></svg></button>
  </div>
</footer>
</body>
</html>
```

FILE: styles.css
```css
* { box-sizing: border-box; }
html, body { height: 100%; }
body {
  margin: 0;
  display: flex;
  flex-direction: column;
  min-height: 100vh;
  overflow: hidden;
  background: #262626;
  color: #f0f0f0;
  font: 12px/15px "Open Sans", "Noto Sans CJK SC", sans-serif;
}
button, select, input { font: inherit; color: inherit; }
button { background: none; border: 0; padding: 0; margin: 0; white-space: nowrap; }
svg { display: block; flex: none; }
.sprite { position: absolute; width: 0; height: 0; }
.i12 { width: 12px; height: 12px; }
.i14 { width: 14px; height: 14px; }
.i16 { width: 16px; height: 16px; }

.caret { display: inline-block; flex: none; border: 3px solid transparent; border-top-color: currentColor; border-bottom: 0; }
.caret.dim { border-top-color: #555; }
.tri-up { border: 2px solid transparent; border-bottom: 3px solid currentColor; border-top: 0; }
.tri-down { border: 2px solid transparent; border-top: 3px solid currentColor; border-bottom: 0; }
.blue { color: #2e83cc; }

/* tab strip */
.tabs { position: relative; display: flex; justify-content: space-between; height: 33px; padding-top: 4px; background: #0a0a0a; border-bottom: 1px solid #1c1c1c; }
.tabs-art { position: absolute; top: 0; right: 0; width: 470px; height: 32px; fill: #1c1c1c; }
.tab-list { position: relative; display: flex; }
.tab-set { display: flex; gap: 1px; }
.tab-set-tight { gap: 0; }
.tab { padding: 0 10px; }
.tab-file { padding: 0 17px 0 16px; }
.tab-active { background: #363636; }
.tab-icon { display: flex; align-items: center; gap: 12px; }
.bulb { width: 12px; height: 16px; }
.share { position: relative; display: flex; align-items: center; gap: 5px; padding-right: 21px; }

/* ribbon */
.ribbon { display: flex; height: 90px; padding: 3px 0; background: #363636; }
.group { display: flex; flex-direction: column; border-right: 1px solid #484848; }
.group-body { display: flex; flex: 1; }
.group-foot { display: flex; align-items: center; line-height: 13px; }
.group-foot span { flex: 1; text-align: center; }
.launch { width: 17px; padding-left: 5px; }
.launch svg { width: 8px; height: 8px; color: #aaa; }
.launch.off svg { color: #555; }
.big { display: flex; flex-direction: column; align-items: center; padding-top: 3px; width: 46px; align-self: flex-start; }
.big-icon { width: 30px; height: 30px; margin-bottom: 2px; }
.big .caret { margin-left: 4px; vertical-align: 2px; }
.big .caret-line .caret { margin-left: 0; }
.stack { display: flex; flex-direction: column; }
.small { display: flex; align-items: center; gap: 3px; height: 22px; }
.small .caret { margin-left: 2px; }
.stack.off, .quick { color: #5a5a5a; }
.rows { display: flex; flex-direction: column; gap: 8px; padding-top: 7px; }
.row { display: flex; align-items: center; height: 22px; }
.cell { display: flex; align-items: center; justify-content: center; width: 21px; height: 22px; color: #565656; }
.cell.drop { width: 33px; gap: 5px; }
.sep { width: 1px; height: 21px; background: #555; }

.g-clip { width: 89px; }
.g-clip .group-body { padding-left: 5px; }
.g-clip .small { gap: 3px; }
.g-slides { width: 122px; }
.g-slides .group-body { padding-left: 8px; gap: 4px; }
.g-slides .small { gap: 2px; }
.g-used { width: 77px; }
.g-used .group-body { padding-left: 4px; }
.glyph-disc { width: 26px; height: 26px; margin: 2px 0 4px; border-radius: 50%; background: #eee; color: #333; font-size: 18px; line-height: 26px; text-align: center; }
.grow { align-items: flex-start; gap: 0; font-size: 15px; line-height: 22px; }
.grow .tri-up { margin-top: 4px; }
.grow + .grow { font-size: 14px; }

.g-font { width: 252px; }
.g-font .group-body { padding-left: 6px; }
.combo { display: grid; align-items: center; border: 1px solid #444; height: 23px; }
.combo select { grid-area: 1 / 1; width: 100%; height: 21px; border: 0; background: none; appearance: none; }
.combo .caret { grid-area: 1 / 1; justify-self: end; margin-right: 4px; }
.combo-name { width: 123px; }
.combo-size { width: 47px; border-left: 0; }
.letter { font-size: 14px; }
.large-a { font-size: 15px; }
.letter .tri-up, .letter .tri-down { align-self: flex-start; margin-top: 4px; }
.cell.wide { width: 28px; }
.bold { font-weight: 700; }
.italic { font-style: italic; }
.under { text-decoration: underline; }
.shadow { font-weight: 700; text-shadow: 1px 1px #2a2a2a; }
.strike { font-size: 10px; text-decoration: line-through; }
.g-font .cell.drop { width: 31px; gap: 4px; }
.spaced span { border-bottom: 2px solid #565656; line-height: 14px; }
.cell.mid { color: #707070; }

.g-para { width: 188px; }
.g-para .group-body { padding-left: 7px; }
.g-para .stack { color: #5c5c5c; margin-left: auto; padding-right: 10px; }

.g-draw { width: 324px; }
.g-draw .group-body { padding-left: 8px; }
.gallery { display: flex; align-self: flex-start; margin-top: 2px; border: 1px solid #5a5a5a; background: #404040; }
.gallery-grid { display: grid; grid-template-columns: repeat(6, 19px); padding: 0 2px; }
.gallery-grid button { display: grid; place-items: center; height: 19px; }
.gallery-grid svg { width: 15px; height: 13px; }
.fl { fill: #eee; }
.ln { fill: none; stroke: #bbb; }
.gallery-nav { display: grid; grid-template-rows: repeat(3, 1fr); width: 13px; background: #2c2c2c; border-left: 1px solid #5a5a5a; }
.gallery-nav button { display: grid; place-items: center; }
.gallery-nav button + button { border-top: 1px solid #5a5a5a; }
.gallery-nav .tri-up { color: #555; }
.over { box-shadow: 0 -2px #262626, 0 -3px #eee; }
.arrange { width: 44px; }
.quick { width: 48px; }
.stack.off { margin-left: 4px; }
.stack.off .small { gap: 2px; }
.g-edit { width: 78px; }
.g-edit .group-body { padding-left: 11px; }
.g-edit .far .caret { margin-left: 6px; }
.collapse { margin-left: auto; align-self: flex-end; padding-right: 7px; }
.collapse svg { width: 12px; height: 7px; }

/* quick tools */
.toolbar { display: flex; height: 34px; padding: 0 15px 4px 1px; border-top: 1px solid #303030; }
.tool { display: flex; align-items: center; justify-content: center; flex: 28 1 28px; color: #e4e4e4; }
.tool.drop { flex: 33 1 33px; justify-content: flex-start; gap: 5px; padding-left: 3px; }
.tool svg { width: 16px; height: 16px; }
.tool.off { color: #484848; }
.tool-letter { width: 16px; font-size: 15px; text-align: center; }
.wen { width: 16px; height: 16px; background: #fff; color: #333; font-size: 13px; line-height: 16px; text-align: center; }

/* workspace */
.work { display: flex; flex: 1; min-height: 0; }
.thumbs { display: flex; align-items: flex-start; width: 188px; padding: 15px 17px 0 12px; border-right: 1px solid #444; }
.thumb-no { width: 21px; font-size: 14px; line-height: 14px; }
.thumb { flex: 1; aspect-ratio: 137 / 79; border: 3px solid #f18e7c; background: #fff; box-shadow: inset 0 0 0 1px #777; }
.canvas { position: relative; flex: 1; display: grid; place-items: center; padding: 0 16px 2px 0; border-bottom: 1px solid #3a3a3a; margin-bottom: 2px; }
.slide { width: 406px; padding: 37px 49px 51px 50px; background: #fff; color: #222; border: 1px solid #ccc; font-family: "Noto Sans CJK SC", sans-serif; }
.ph { margin: 0; border: 1px dotted #888; text-align: center; }
.ph-title { height: 81px; padding-top: 44px; font-size: 25px; line-height: 36px; font-weight: 300; }
.ph-sub { height: 57px; margin-top: 1px; font-size: 10px; line-height: 13px; }
.watermark { position: absolute; right: 20px; bottom: -6px; display: flex; gap: 8px; color: #fff; font: 33px/40px "Noto Sans CJK SC", sans-serif; text-shadow: 2px 2px #000; }
.watermark b { font-size: 32px; font-weight: 900; }

/* status bar */
.status { display: flex; align-items: center; height: 21px; padding: 0 6px 0 7px; border-top: 1px solid #3a3a3a; }
.proof { margin: 0 16px 0 17px; }
.proof svg { width: 14px; height: 12px; }
.status-right { display: flex; align-items: center; align-self: stretch; margin-left: auto; }
.note { display: flex; align-items: center; gap: 4px; }
.comment { margin: 0 16px 0 18px; gap: 3px; }
.view { display: grid; place-items: center; align-self: stretch; width: 39px; }
.view-on { background: #4a4a4a; }
.view svg { width: 14px; height: 14px; }
.zoom-step { margin: 0 5px; }
.zoom-step svg { width: 8px; height: 8px; }
.zoom { appearance: none; width: 96px; height: 12px; margin: 0; background: linear-gradient(#ddd, #ddd) center / 1px 6px no-repeat, linear-gradient(#aaa, #aaa) center / 100% 1px no-repeat; }
.zoom::-webkit-slider-thumb { appearance: none; width: 5px; height: 12px; background: #fff; }
.zoom-value { margin: 0 12px 0 8px; }
.fit svg { width: 12px; height: 12px; }
```
